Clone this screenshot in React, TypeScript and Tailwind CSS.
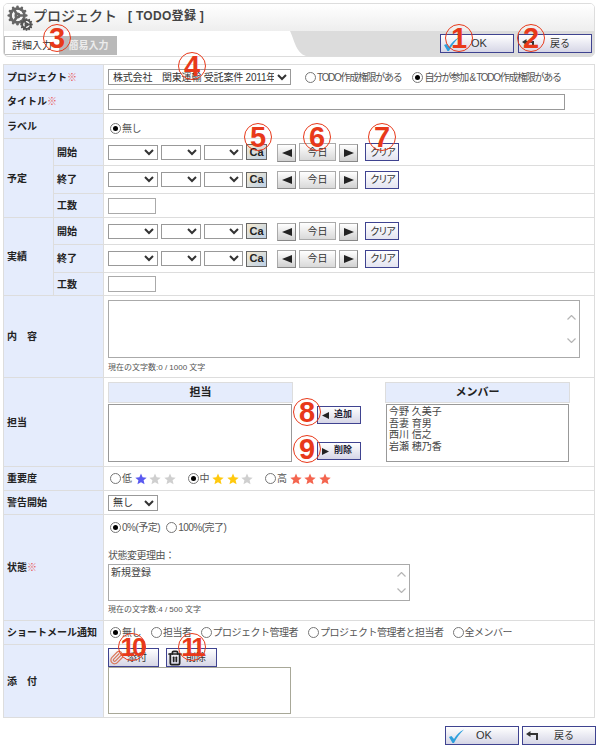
import React from "react";
import { Cog, Paperclip, Trash2 } from "lucide-react";

const FONT = "font-['Liberation_Sans','Noto_Sans_CJK_JP',sans-serif]";

function Radio({ on = false }: { on?: boolean }) {
  return (
    <span className="inline-flex h-[11px] w-[11px] shrink-0 items-center justify-center rounded-full border border-[#777] bg-white">
      {on && <span className="h-[5px] w-[5px] rounded-full bg-black" />}
    </span>
  );
}

function Opt({ on, children, className = "" }: { on?: boolean; children: React.ReactNode; className?: string }) {
  return (
    <span className={`inline-flex items-center gap-[1px] whitespace-nowrap text-[10px] tracking-[-0.5px] text-[#555] ${className}`}>
      <Radio on={on} />
      {children}
    </span>
  );
}

function Star({ c }: { c: string }) {
  return (
    <svg width="12" height="12" viewBox="0 0 24 24" className="shrink-0">
      <path d="M12 1l3.2 7.6 8.2.7-6.2 5.4 1.9 8L12 18.4 4.9 22.7l1.9-8L.6 9.3l8.2-.7z" fill={c} />
    </svg>
  );
}

function Stars({ colors }: { colors: string[] }) {
  return (
    <span className="ml-[3px] inline-flex gap-[2.5px]">
      {colors.map((c, i) => (
        <Star key={i} c={c} />
      ))}
    </span>
  );
}

function Check() {
  return (
    <svg width="15" height="14" viewBox="0 0 15 14" className="shrink-0">
      <path d="M0 8l2.5-1 2.5 3C7.5 6 10.5 2.5 15 .5 11 4 7.5 9 5 14H3.5z" fill="#2e9fdc" />
    </svg>
  );
}

function BackArrow() {
  return (
    <svg width="12" height="9" viewBox="0 0 12 9" className="shrink-0">
      <path d="M0 3l4.5-3v2h7.5v7h-2V4H4.5v2z" fill="#333" />
    </svg>
  );
}

function MainBtn({ kind }: { kind: "ok" | "back" }) {
  return (
    <button className="flex h-[19px] w-[74px] items-center border border-[#3f4390] bg-gradient-to-b from-white to-[#d6d6e6] pl-[3px] text-[#333]">
      {kind === "ok" ? <Check /> : <BackArrow />}
      {kind === "ok" ? (
        <span className="ml-[12px] text-[11px]">OK</span>
      ) : (
        <span className="ml-[16px] text-[10px]">戻る</span>
      )}
    </button>
  );
}

function Sel({ w }: { w: string }) {
  return (
    <select className={`${w} h-[15px] rounded-none border border-[#999] bg-white text-[10px] text-[#333]`}>
      <option></option>
    </select>
  );
}

function ArrowBtn({ right = false }: { right?: boolean }) {
  return (
    <button className="mt-[1px] flex h-[18px] w-[19px] items-center justify-center border border-[#aaa] border-b-[#888] border-r-[#888] bg-gradient-to-b from-white to-[#d0d0d0]">
      <svg width="10" height="8" viewBox="0 0 10 8">
        <path d={right ? "M0 0l10 4-10 4z" : "M10 0L0 4l10 4z"} fill="#222" />
      </svg>
    </button>
  );
}

function DateRow() {
  return (
    <div className="flex items-center">
      <Sel w="w-[50px]" />
      <span className="w-[3px]" />
      <Sel w="w-[40px]" />
      <span className="w-[3px]" />
      <Sel w="w-[39px]" />
      <button className="ml-[3px] flex h-[16px] w-[21px] items-center justify-center border border-[#666] bg-gradient-to-br from-[#f5e9cf] to-[#bcd0e6] text-[11px] font-bold text-[#222]">
        Ca
      </button>
      <span className="ml-[10px]">
        <ArrowBtn />
      </span>
      <button className="ml-[3px] flex h-[18px] w-[37px] items-center justify-center border border-[#aaa] bg-gradient-to-b from-white to-[#d9d9d9] text-[10px] text-[#333]">
        今日
      </button>
      <span className="ml-[3px]">
        <ArrowBtn right />
      </span>
      <button className="ml-[7px] flex h-[18px] w-[34px] items-center justify-center border border-[#3f4390] bg-gradient-to-b from-white to-[#e4e4f0] text-[10px] tracking-[-2px] text-[#333]">
        クリア
      </button>
    </div>
  );
}

function Req() {
  return <span className="font-normal text-[#e85a5a]">※</span>;
}

function Num({ n, x, y }: { n: string; x: number; y: number }) {
  return (
    <span
      className={`absolute flex h-[28px] w-[28px] items-center justify-center rounded-full border-[1.5px] border-[#e8391a] font-bold leading-none text-[#e8391a] ${
        n.length > 1 ? "text-[26px] tracking-[-3px]" : "text-[29px]"
      }`}
      style={{ left: x - 14, top: y - 14 }}
    >
      {n}
    </span>
  );
}

const th = "border border-[#ddd] bg-[#e5ecfc] pl-[3px] text-left text-[10px] font-bold text-[#222]";
const td = "border border-[#ddd] bg-white pl-[4px] align-middle";

function Scroll({ className, arrows, children }: { className: string; arrows: string; children?: React.ReactNode }) {
  return (
    <div className={`relative border border-[#aaa] bg-white ${className}`}>
      <div className="px-[2px] py-[1px] text-[10px] leading-[13px] text-[#444]">{children}</div>
      <div className={`absolute right-0 top-0 flex h-full w-[15px] flex-col items-center justify-between ${arrows}`}>
        <svg width="9" height="5" viewBox="0 0 9 5"><path d="M.5 4.5l4-4 4 4" fill="none" stroke="#b5b5b5" strokeWidth="1.2" /></svg>
        <svg width="9" height="5" viewBox="0 0 9 5"><path d="M.5.5l4 4 4-4" fill="none" stroke="#b5b5b5" strokeWidth="1.2" /></svg>
      </div>
    </div>
  );
}

function ListBtn({ right = false, label }: { right?: boolean; label: string }) {
  return (
    <button className="flex h-[18px] w-[44px] items-center border border-[#3f4390] bg-gradient-to-b from-white to-[#d6d6e6] pl-[4px] text-[9px] font-bold text-[#223]">
      <svg width="7" height="7" viewBox="0 0 7 7" className="shrink-0">
        <path d={right ? "M0 0l7 3.5L0 7z" : "M7 0L0 3.5 7 7z"} fill="#222" />
      </svg>
      <span className="ml-[5px]">{label}</span>
    </button>
  );
}

export default function App() {
  return (
    <div className={`relative h-[747px] w-[600px] overflow-hidden bg-white pl-[3px] pt-[3px] ${FONT}`}>
      {/* Header */}
      <div className="h-[54px] w-[592px] overflow-hidden rounded-[5px] border border-[#ddd] bg-white">
        <div className="flex h-[27px] items-center bg-gradient-to-b from-white to-[#eeeeee]">
          <span className="relative ml-[3px] h-[26px] w-[26px]">
            <Cog size={21} strokeWidth={3} className="text-[#666]" />
            <Cog size={13} strokeWidth={3.4} className="absolute bottom-0 right-0 text-[#555]" />
          </span>
          <span className="pb-[3px] text-[14px] font-medium leading-none text-[#444]">プロジェクト</span>
          <span className="ml-[11px] pb-[3px] text-[12px] font-bold leading-none tracking-[0.3px] text-[#444]">[ TODO登録 ]</span>
        </div>
        <div className="flex h-[25px]">
          <div className="flex w-[286px] items-end pb-[1px]">
            <span className="flex h-[19px] w-[56px] items-center justify-center border border-[#bbb] bg-white text-[10px] text-[#333]">
              詳細入力
            </span>
            <span className="flex h-[19px] w-[57px] items-center justify-center bg-[#b9b9b9] text-[10px] font-bold text-[#ececec]">
              簡易入力
            </span>
          </div>
          <svg width="16" height="25" viewBox="0 0 16 25" className="shrink-0">
            <path d="M0 0C4 8 6 22 16 25V0z" fill="#dcdcdc" />
          </svg>
          <div className="flex flex-1 items-center justify-end gap-[4px] bg-[#dcdcdc] pr-[2px]">
            <MainBtn kind="ok" />
            <MainBtn kind="back" />
          </div>
        </div>
      </div>

      {/* Form */}
      <table className="mt-[7px] w-[592px] table-fixed border-collapse">
        <colgroup>
          <col className="w-[50px]" />
          <col className="w-[50px]" />
          <col />
        </colgroup>
        <tbody>
          <tr className="h-[25px]">
            <th colSpan={2} className={th}>プロジェクト<Req /></th>
            <td className={td}>
              <div className="flex items-center">
                <select className="h-[16px] w-[183px] rounded-none border border-[#999] bg-white text-[10px] tracking-[-0.2px] text-[#333]">
                  <option>株式会社　関東運輸 受託案件 2011年</option>
                </select>
                <Opt className="ml-[14px] tracking-[-1.3px]">TODO作成権限がある</Opt>
                <Opt on className="ml-[11px] tracking-[-1.3px]">自分が参加 &amp; TODO作成権限がある</Opt>
              </div>
            </td>
          </tr>
          <tr className="h-[24px]">
            <th colSpan={2} className={th}>タイトル<Req /></th>
            <td className={td}>
              <input className="block h-[16px] w-[457px] border border-[#999] bg-white" />
            </td>
          </tr>
          <tr className="h-[25px]">
            <th colSpan={2} className={th}>ラベル</th>
            <td className={td}><Opt on className="ml-[2px]">無し</Opt></td>
          </tr>
          <tr className="h-[27px]">
            <th rowSpan={3} className={th}>予定</th>
            <th className={th}>開始</th>
            <td className={td}><DateRow /></td>
          </tr>
          <tr className="h-[28px]">
            <th className={th}>終了</th>
            <td className={td}><DateRow /></td>
          </tr>
          <tr className="h-[24px]">
            <th className={th}>工数</th>
            <td className={td}><input className="block h-[16px] w-[48px] border border-[#aaa] bg-white" /></td>
          </tr>
          <tr className="h-[27px]">
            <th rowSpan={3} className={th}>実績</th>
            <th className={th}>開始</th>
            <td className={td}><DateRow /></td>
          </tr>
          <tr className="h-[28px]">
            <th className={th}>終了</th>
            <td className={td}><DateRow /></td>
          </tr>
          <tr className="h-[23px]">
            <th className={th}>工数</th>
            <td className={td}><input className="block h-[16px] w-[48px] border border-[#aaa] bg-white" /></td>
          </tr>
          <tr className="h-[82px]">
            <th colSpan={2} className={th}>内　容</th>
            <td className={td}>
              <Scroll className="h-[58px] w-[472px]" arrows="py-[14px]" />
              <div className="mt-[5px] text-[8px] leading-[10px] text-[#555]">現在の文字数:0 / 1000 文字</div>
            </td>
          </tr>
          <tr className="h-[89px]">
            <th colSpan={2} className={th}>担当</th>
            <td className={td}>
              <div className="flex">
                <div className="w-[185px]">
                  <div className="flex h-[21px] items-center justify-center border border-[#ddd] bg-[#e5ecfc] text-[11px] font-bold text-[#222]">担当</div>
                  <div className="mt-[1px] h-[58px] w-[184px] border border-[#999] bg-white" />
                </div>
                <div className="ml-[24px] flex w-[44px] flex-col pt-[24px]">
                  <ListBtn label="追加" />
                  <span className="h-[18px]" />
                  <ListBtn right label="削除" />
                </div>
                <div className="ml-[24px] w-[185px]">
                  <div className="flex h-[21px] items-center justify-center border border-[#ddd] bg-[#e5ecfc] text-[11px] font-bold text-[#222]">メンバー</div>
                  <div className="ml-[1px] mt-[1px] h-[58px] w-[183px] border border-[#999] bg-white px-[2px] py-[1px] text-[10px] leading-[11.5px] text-[#444]">
                    <div>今野 久美子</div>
                    <div>吾妻 育男</div>
                    <div>西川 信之</div>
                    <div>岩瀬 穂乃香</div>
                  </div>
                </div>
              </div>
            </td>
          </tr>
          <tr className="h-[24px]">
            <th colSpan={2} className={th}>重要度</th>
            <td className={td}>
              <div className="flex items-center pl-[2px]">
                <Opt>低</Opt>
                <Stars colors={["#5a5af0", "#cfcfcf", "#cfcfcf"]} />
                <Opt on className="ml-[12px]">中</Opt>
                <Stars colors={["#ffc90e", "#ffc90e", "#cfcfcf"]} />
                <Opt className="ml-[12px]">高</Opt>
                <Stars colors={["#f4654f", "#f4654f", "#f4654f"]} />
              </div>
            </td>
          </tr>
          <tr className="h-[24px]">
            <th colSpan={2} className={th}>警告開始</th>
            <td className={td}>
              <select className="block h-[16px] w-[50px] rounded-none border border-[#999] bg-white text-[10px] text-[#333]">
                <option>無し</option>
              </select>
            </td>
          </tr>
          <tr className="h-[106px]">
            <th colSpan={2} className={th}>状態<Req /></th>
            <td className={td}>
              <div className="flex items-center pl-[2px]">
                <Opt on>0%(予定)</Opt>
                <Opt className="ml-[6px]">100%(完了)</Opt>
              </div>
              <div className="mt-[14px] text-[10px] leading-[14px] tracking-[-0.5px] text-[#555]">状態変更理由：</div>
              <Scroll className="mt-[1px] h-[37px] w-[302px]" arrows="py-[7px]">新規登録</Scroll>
              <div className="mt-[4px] text-[8px] leading-[10px] text-[#555]">現在の文字数:4 / 500 文字</div>
            </td>
          </tr>
          <tr className="h-[24px]">
            <th colSpan={2} className={`${th} whitespace-nowrap`}>ショートメール通知</th>
            <td className={td}>
              <div className="flex items-center pl-[2px]">
                <Opt on>無し</Opt>
                <Opt className="ml-[10px]">担当者</Opt>
                <Opt className="ml-[9px]">プロジェクト管理者</Opt>
                <Opt className="ml-[10px]">プロジェクト管理者と担当者</Opt>
                <Opt className="ml-[9px]">全メンバー</Opt>
              </div>
            </td>
          </tr>
          <tr className="h-[73px]">
            <th colSpan={2} className={th}>添　付</th>
            <td className={`${td} align-top`}>
              <div className="mt-[3px] flex">
                <button className="flex h-[19px] w-[51px] items-center border border-[#3f4390] bg-gradient-to-b from-white to-[#d6d6e6] text-[10px] text-[#333]">
                  <Paperclip size={15} className="text-[#d9785a]" />
                  <span className="ml-[3px]">添付</span>
                </button>
                <button className="ml-[7px] flex h-[19px] w-[51px] items-center border border-[#3f4390] bg-gradient-to-b from-white to-[#d6d6e6] text-[10px] text-[#333]">
                  <Trash2 size={16} strokeWidth={2.6} className="text-[#222]" />
                  <span className="ml-[3px]">削除</span>
                </button>
              </div>
              <div className="h-[47px] w-[183px] border border-[#a8a898] bg-white" />
            </td>
          </tr>
        </tbody>
      </table>

      <div className="mt-[8px] flex w-[593px] justify-end gap-[3px]">
        <MainBtn kind="ok" />
        <MainBtn kind="back" />
      </div>

      {/* Callout numbers drawn over the form */}
      <Num n="1" x={459} y={38} />
      <Num n="2" x={531} y={38} />
      <Num n="3" x={57} y={38} />
      <Num n="4" x={192} y={66} />
      <Num n="5" x={258} y={137} />
      <Num n="6" x={317} y={137} />
      <Num n="7" x={382} y={137} />
      <Num n="8" x={307} y={412} />
      <Num n="9" x={307} y={449} />
      <Num n="10" x={132} y={647} />
      <Num n="11" x={192} y={647} />
    </div>
  );
}
